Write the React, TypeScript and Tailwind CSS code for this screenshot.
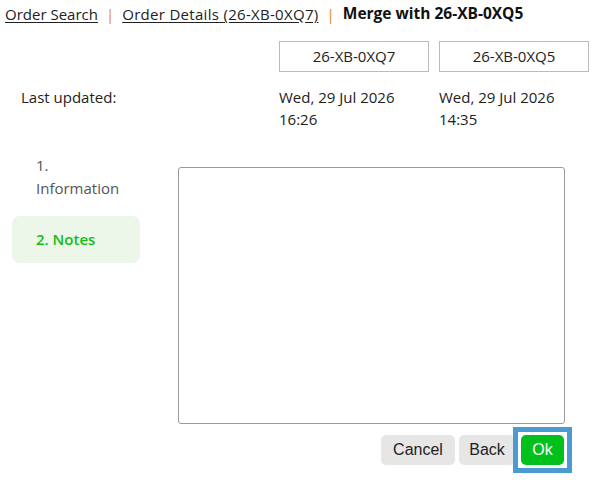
import React from 'react';

const btnFont = { fontFamily: '"Liberation Sans", Arial, sans-serif' };

export default function App() {
  return (
    <div className="w-[595px] h-[480px] bg-white text-[#222] font-['Open_Sans',sans-serif] text-[15px]">
      {/* breadcrumb */}
      <div className="flex items-center h-[28px] px-[5px] gap-[8px]">
        <a className="underline underline-offset-2 text-[#222]">Order Search</a>
        <span className="text-[#e08a1e]">|</span>
        <a className="underline underline-offset-2 text-[#222] tracking-[0.3px]">Order Details (26-XB-0XQ7)</a>
        <span className="text-[#e08a1e]">|</span>
        <span className="font-bold text-[15.5px] text-[#111]">Merge with 26-XB-0XQ5</span>
      </div>

      {/* order ids */}
      <div className="flex gap-[10px] pl-[279px] pt-[13px]">
        <div className="w-[150px] h-[31px] border border-[#bbb] flex items-center justify-center">26-XB-0XQ7</div>
        <div className="w-[150px] h-[31px] border border-[#bbb] flex items-center justify-center">26-XB-0XQ5</div>
      </div>

      {/* last updated */}
      <div className="flex pt-[14px] leading-[22px]">
        <div className="w-[279px] pl-[21px]">Last updated:</div>
        <div className="w-[160px]">Wed, 29 Jul 2026<br />16:26</div>
        <div className="w-[150px]">Wed, 29 Jul 2026<br />14:35</div>
      </div>

      {/* steps + notes */}
      <div className="flex pt-[22px]">
        <div className="w-[178px] pl-[12px] flex flex-col">
          <div className="pl-[24px] pt-[2px] text-[#555] leading-[23px]">1.<br />Information</div>
          <div className="mt-[16px] w-[128px] h-[47px] rounded-[8px] bg-[#ecf7ea] pl-[24px] flex items-center text-[#14bd14] font-semibold">2. Notes</div>
        </div>
        <div className="flex flex-col pt-[15px]">
          <textarea className="w-[387px] h-[257px] border border-[#999] rounded-[3px] resize-none" />
          <div className="flex justify-end items-center mt-[11px] pr-[1px]">
            <button className="h-[30px] w-[74px] bg-[#e6e6e6] rounded-[5px] text-[#222] text-[16px]" style={btnFont}>Cancel</button>
            <button className="h-[30px] w-[56px] ml-[4px] bg-[#e6e6e6] rounded-[5px] text-[#222] text-[16px]" style={btnFont}>Back</button>
            <button className="relative h-[30px] w-[43px] ml-[6px] bg-[#00c01c] rounded-[5px] text-white text-[16px]" style={btnFont}>
              Ok
              <span className="absolute -inset-[8px] border-[5px] border-[#4a9bd1] pointer-events-none" />
            </button>
          </div>
        </div>
      </div>
    </div>
  );
}
